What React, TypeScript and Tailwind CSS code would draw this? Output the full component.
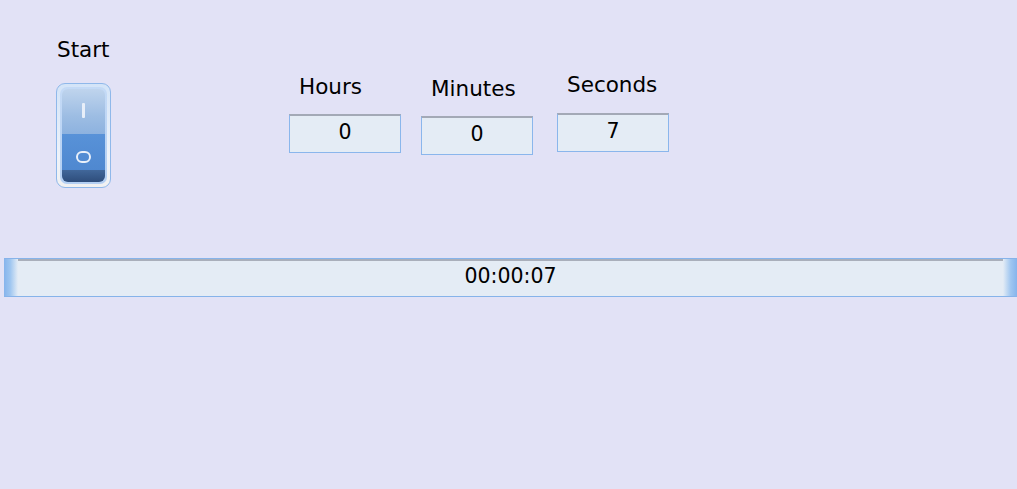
import React from "react";

const TimeField = ({ label, value, labelTop, boxTop }: { label: string; value: string; labelTop: string; boxTop: string }) => (
  <div className="flex w-[112px] flex-col">
    <span className={`${labelTop} pl-[10px] text-[21.5px] leading-none text-black`}>{label}</span>
    <div
      className={`${boxTop} flex h-[39px] w-[112px] items-center justify-center border border-[#8ab6ec] border-t-2 border-t-[#a3a9b6] bg-[#e4ecf5] pb-[2px] text-[20.5px] leading-none text-black`}
    >
      {value}
    </div>
  </div>
);

const RockerSwitch = () => (
  <div className="h-[105px] w-[55px] rounded-[9px] border border-[#8fb8ea] bg-[linear-gradient(to_bottom,#d3e4f8,#eef3fa_70%,#f1f1f1)] p-[3px]">
    <div className="h-full rounded-[7px] bg-[linear-gradient(to_bottom,#c4daf6,#b3cff3)] p-[2px]">
      <div className="flex h-full flex-col overflow-hidden rounded-[6px]">
        <div className="flex h-[45px] justify-center bg-[linear-gradient(to_bottom,#bfd4ed,#9dbde3_60%,#8db2df)] pt-[14px]">
          <div className="h-[15px] w-[3px] rounded-[1px] bg-[#e8eff9]" />
        </div>
        <div className="flex h-[36px] items-start justify-center bg-[linear-gradient(to_bottom,#5892d8,#4f88d0)] pt-[17px]">
          <div className="h-[12px] w-[15px] rounded-full border-2 border-[#e9f0fa]" />
        </div>
        <div className="flex-1 bg-[linear-gradient(to_bottom,#41679a,#2e4d7b)]" />
      </div>
    </div>
  </div>
);

export default function App() {
  return (
    <div className="min-h-screen w-full bg-[#e2e2f6] font-['DejaVu_Sans',sans-serif] text-black">
      <div className="flex h-[258px] items-start">
        {/* start switch */}
        <div className="ml-[56px] flex flex-col">
          <span className="ml-[1px] mt-[39px] text-[21.5px] leading-none">Start</span>
          <div className="mt-[22px]">
            <RockerSwitch />
          </div>
        </div>

        {/* time inputs */}
        <div className="ml-[178px]">
          <TimeField label="Hours" value="0" labelTop="mt-[76px]" boxTop="mt-[16px]" />
        </div>
        <div className="ml-[20px]">
          <TimeField label="Minutes" value="0" labelTop="mt-[78px]" boxTop="mt-[16px]" />
        </div>
        <div className="ml-[24px]">
          <TimeField label="Seconds" value="7" labelTop="mt-[74px]" boxTop="mt-[17px]" />
        </div>
      </div>

      {/* countdown bar */}
      <div className="ml-[4px] flex h-[39px] w-[1013px] border-y border-[#86b3ea]">
        <div className="w-[14px] bg-[linear-gradient(to_right,#86b4ec,#9fc6f0_45%,#e4ecf5)]" />
        <div className="flex flex-1 items-center justify-center border-t-2 border-t-[#a9afbb] bg-[#e4ecf5] pb-[4px] text-[20.5px] leading-none">
          00:00:07
        </div>
        <div className="w-[14px] bg-[linear-gradient(to_left,#86b4ec,#9fc6f0_45%,#e4ecf5)]" />
      </div>
    </div>
  );
}
